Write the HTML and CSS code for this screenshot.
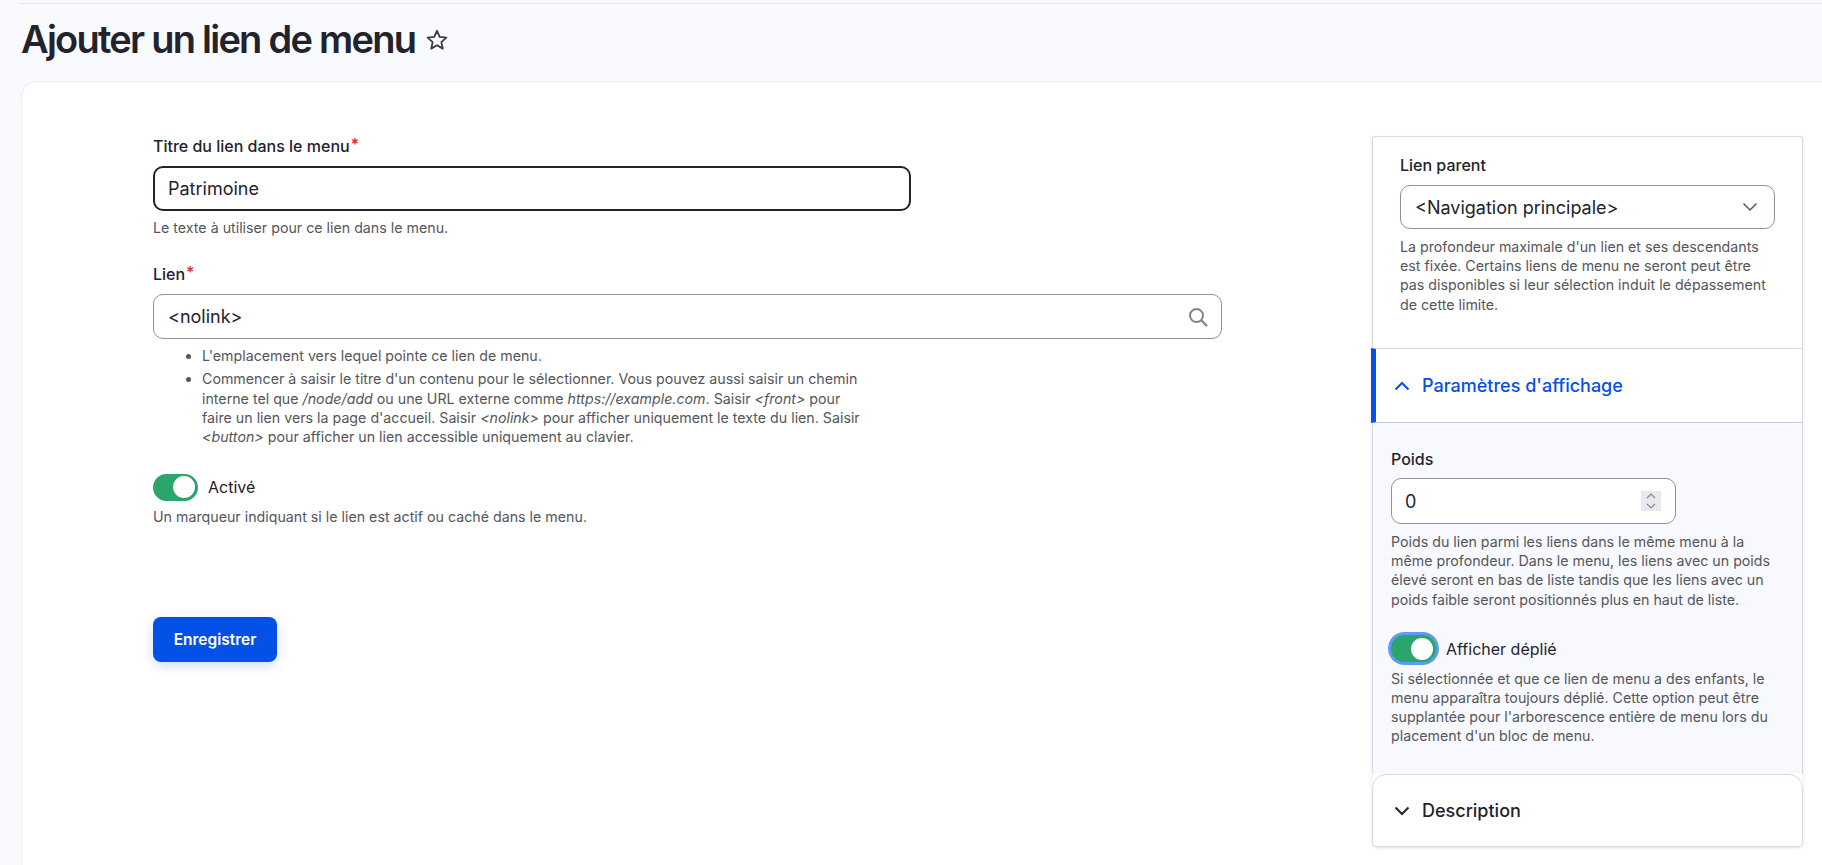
FILE: index.html
```html
<!DOCTYPE html>
<html lang="fr">
<head>
<meta charset="utf-8">
<title>Ajouter un lien de menu</title>
<link rel="stylesheet" href="styles.css">
</head>
<body>
<div class="topline"></div>
<header class="page-head">
  <h1>Ajouter un lien de menu</h1>
  <svg class="star" width="24" height="24" viewBox="0 0 22 22"><path d="M11 2.600l2.500 5.600 6.100.6-4.600 4.100 1.300 6-5.300-3.100-5.300 3.100 1.300-6-4.600-4.100 6.100-.6z" fill="none" stroke="#3a3d47" stroke-width="1.700" stroke-linejoin="round"/></svg>
</header>
<main class="card">
  <section class="main-col">
    <div class="field field-title">
      <div class="label">Titre du lien dans le menu<span class="req">*</span></div>
      <div class="input input-focus">Patrimoine</div>
      <div class="help">Le texte à utiliser pour ce lien dans le menu.</div>
    </div>
    <div class="field field-link">
      <div class="label">Lien<span class="req">*</span></div>
      <div class="input input-link">
        <span>&lt;nolink&gt;</span>
        <svg width="22" height="22" viewBox="0 0 22 22"><circle cx="9.500" cy="9.500" r="6.500" fill="none" stroke="#828388" stroke-width="2"/><path d="M14.500 14.500l5 5" stroke="#828388" stroke-width="2.200" stroke-linecap="round"/></svg>
      </div>
      <ul class="help-list">
        <li>L'emplacement vers lequel pointe ce lien de menu.</li>
        <li>Commencer à saisir le titre d'un contenu pour le sélectionner. Vous pouvez aussi saisir un chemin interne tel que <em>/node/add</em> ou une URL externe comme <em>https://example.com</em>. Saisir <em>&lt;front&gt;</em> pour<br>faire un lien vers la page d'accueil. Saisir <em>&lt;nolink&gt;</em> pour afficher uniquement le texte du lien. Saisir <em>&lt;button&gt;</em> pour afficher un lien accessible uniquement au clavier.</li>
      </ul>
    </div>
    <div class="field field-toggle">
      <div class="toggle-row">
        <span class="toggle"></span>
        <span class="toggle-label">Activé</span>
      </div>
      <div class="help">Un marqueur indiquant si le lien est actif ou caché dans le menu.</div>
    </div>
    <button class="save" type="button">Enregistrer</button>
  </section>
  <aside class="side">
    <div class="panel-top">
      <div class="label">Lien parent</div>
      <div class="input input-select">
        <span>&lt;Navigation principale&gt;</span>
        <svg width="16" height="10" viewBox="0 0 16 10"><path d="M1.500 1.500L8 8l6.500-6.500" fill="none" stroke="#55565b" stroke-width="1.500"/></svg>
      </div>
      <div class="help">La profondeur maximale d'un lien et ses descendants est fixée. Certains liens de menu ne seront peut être pas disponibles si leur sélection induit le dépassement de cette limite.</div>
    </div>
    <div class="summary summary-open">
      <svg width="16" height="10" viewBox="0 0 16 10"><path d="M1.500 8.500L8 2l6.500 6.500" fill="none" stroke="#0550e6" stroke-width="2"/></svg>
      <span>Paramètres d'affichage</span>
    </div>
    <div class="panel-body">
      <div class="label">Poids</div>
      <div class="input input-number">
        <span>0</span>
        <span class="spin"><svg width="10" height="16" viewBox="0 0 10 16"><path d="M1 5l4-4 4 4M1 11l4 4 4-4" fill="none" stroke="#85868c" stroke-width="1.200"/></svg></span>
      </div>
      <div class="help">Poids du lien parmi les liens dans le même menu à la même profondeur. Dans le menu, les liens avec un poids élevé seront en bas de liste tandis que les liens avec un poids faible seront positionnés plus en haut de liste.</div>
      <div class="toggle-row toggle-row-side">
        <span class="toggle toggle-focus"></span>
        <span class="toggle-label">Afficher déplié</span>
      </div>
      <div class="help">Si sélectionnée et que ce lien de menu a des enfants, le menu apparaîtra toujours déplié. Cette option peut être supplantée pour l'arborescence entière de menu lors du placement d'un bloc de menu.</div>
    </div>
    <div class="summary summary-closed">
      <svg width="16" height="10" viewBox="0 0 16 10"><path d="M1.500 1.500L8 8l6.500-6.500" fill="none" stroke="#22232c" stroke-width="2"/></svg>
      <span>Description</span>
    </div>
  </aside>
</main>
</body>
</html>
```
FILE: styles.css
```css
* { box-sizing: border-box; }
html, body { margin: 0; height: 100%; }
body {
  height: 865px;
  overflow: hidden;
  background: #f9fafe;
  color: #22232c;
  font-family: Inter, "Liberation Sans", sans-serif;
  font-size: 18px;
  display: flex;
  flex-direction: column;
}
.topline {
  margin: 3px 0 0 20px;
  height: 1px;
  background: #e4e6ec;
  flex: none;
}
.page-head {
  display: flex;
  align-items: center;
  gap: 10px;
  margin-left: 21px;
  height: 77px;
  padding-bottom: 6px;
  flex: none;
}
h1 {
  margin: 0;
  font-size: 38px;
  line-height: 1.2;
  font-weight: 600;
  letter-spacing: -1.750px;
  color: #22232c;
}
.card {
  flex: 1;
  margin: 0 -40px 0 21px;
  background: #fff;
  border: 1px solid #eceef3;
  border-bottom: 0;
  border-radius: 16px 16px 0 0;
  padding: 53px 0 0 131px;
  display: grid;
  grid-template-columns: 1069px 431px;
  column-gap: 150px;
  align-items: start;
}
.label {
  font-size: 16px;
  line-height: 22px;
  font-weight: 500;
  color: #22232c;
}
.req {
  color: #d72a2a;
  margin-left: 1px;
  font-size: 16px;
  line-height: 0;
  position: relative;
  top: -2px;
}
.input {
  margin-top: 9px;
  height: 45px;
  background: #fff;
  border: 1px solid #8e929c;
  border-radius: 10px;
  padding: 0 14px;
  display: flex;
  align-items: center;
  justify-content: space-between;
  color: #22232c;
}
.input-focus {
  width: 758px;
  border: 2px solid #22232c;
  padding: 0 13px;
}
.help {
  font-size: 14.220px;
  line-height: 19.200px;
  color: #55565b;
}
.field-title .help { margin-top: 7px; }
.field-link { margin-top: 26px; }
.input-link { padding-right: 12px; }
.help-list {
  margin: 7px 0 0;
  padding: 0 0 0 49px;
  width: 724px;
  font-size: 14.220px;
  line-height: 19.200px;
  color: #55565b;
}
.help-list li { margin-bottom: 4px; }
.help-list li:last-child { margin-bottom: 0; }
.field-toggle { margin-top: 27px; }
.toggle-row {
  display: flex;
  align-items: center;
  gap: 10px;
  height: 28px;
}
.toggle {
  width: 45px;
  height: 27px;
  border-radius: 14px;
  background: #2ba56a;
  display: flex;
  align-items: center;
  justify-content: flex-end;
  padding-right: 3px;
}
.toggle::after {
  content: "";
  width: 22px;
  height: 22px;
  border-radius: 50%;
  background: #fff;
}
.toggle-label { font-size: 16px; color: #22232c; }
.field-toggle .help { margin-top: 6px; }
.save {
  display: block;
  margin-top: 91px;
  width: 124px;
  height: 45px;
  border: 0;
  border-radius: 8px;
  background: #0550e6;
  color: #fff;
  font: 600 15.500px Inter, "Liberation Sans", sans-serif;
  box-shadow: 0 4px 12px rgba(5, 80, 230, 0.2);
}
.side {
  margin-top: 1px;
  width: 431px;
  box-shadow: 0 1px 3px rgba(0, 0, 0, 0.12);
  border-radius: 0 0 6px 6px;
}
.panel-top {
  height: 212px;
  padding: 17px 27px 0 27px;
  border: 1px solid #d9dae0;
  border-bottom: 0;
  border-radius: 3px 3px 0 0;
}
.input-select { margin-top: 9px; height: 44px; }
.input-select + .help { margin-top: 8px; }
.input-select svg { margin-right: 2px; }
.summary {
  display: flex;
  align-items: center;
  gap: 12px;
  font-size: 18px;
  font-weight: 500;
}
.summary-open {
  height: 75px;
  padding-left: 18px;
  margin-left: -1px;
  background: #fff;
  color: #0550e6;
  border-left: 5px solid #0550e6;
  border-top: 1px solid #d9dae0;
  border-right: 1px solid #d9dae0;
  border-bottom: 1px solid #c9cad0;
}
.panel-body {
  height: 351px;
  padding: 25px 28px 0 18px;
  background: #f8f9fe;
  border-left: 1px solid #d9dae0;
  border-right: 1px solid #d9dae0;
}
.input-number { width: 285px; height: 46px; margin-top: 8px; padding-left: 13px; }
.input-number + .help { margin-top: 8px; }
.spin {
  width: 20px;
  height: 20px;
  background: #e8e9ee;
  display: flex;
  align-items: center;
  justify-content: center;
}
.toggle-row-side { margin-top: 26px; }
.toggle-row-side + .help { margin-top: 6px; }
.toggle-focus { box-shadow: 0 0 0 3px #5e9cf2; }
.summary-closed {
  height: 73px;
  padding-left: 21px;
  background: #fff;
  border: 1px solid #d9dae0;
  border-radius: 14px 14px 4px 4px;
  color: #22232c;
}
```
